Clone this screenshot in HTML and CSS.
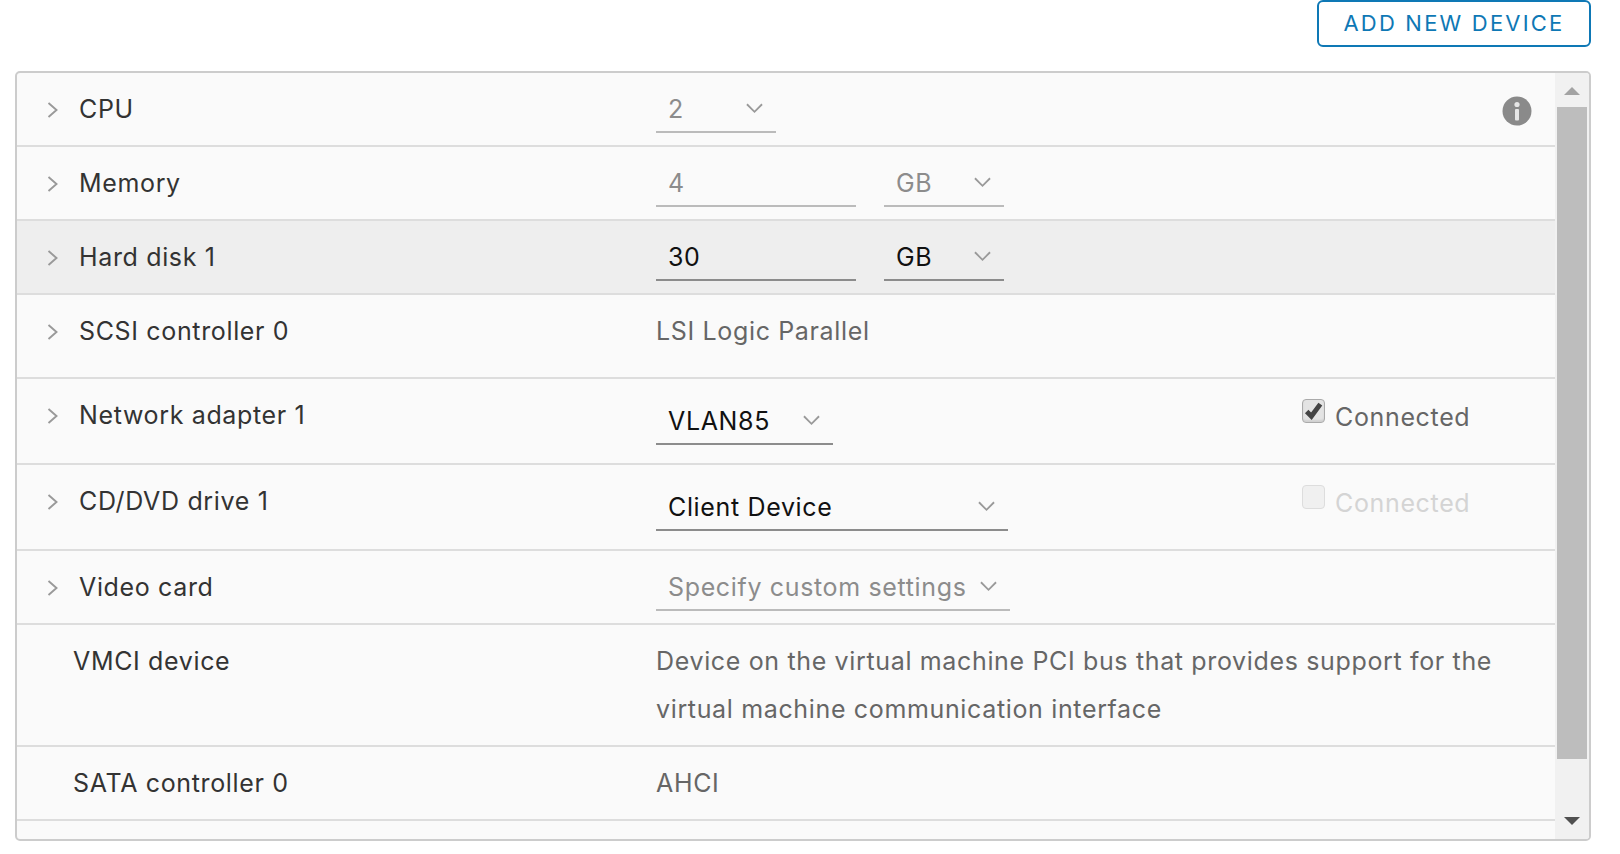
FILE: index.html
```html
<!DOCTYPE html>
<html lang="en">
<head>
<meta charset="utf-8">
<title>Virtual hardware</title>
<link rel="stylesheet" href="styles.css">
</head>
<body>
<div class="toolbar"><button class="add-btn" type="button">ADD NEW DEVICE</button></div>
<div class="panel">
  <div class="rows">
    <div class="row h74">
      <svg class="chev" viewBox="0 0 12 16"><path d="M1.5 1l8 7-8 7"/></svg>
      <div class="name">CPU</div>
      <div class="val">
        <div class="sel dis w120"><span>2</span><svg class="caret" viewBox="0 0 18 11"><path d="M1 1l8 8 8-8"/></svg></div>
      </div>
      <svg class="info" viewBox="0 0 30 30"><circle cx="15" cy="15" r="14.5"/><circle class="i" cx="15" cy="8.5" r="2.6"/><rect class="i" x="13" y="13" width="4" height="11.5" rx="1"/></svg>
    </div>
    <div class="row h74">
      <svg class="chev" viewBox="0 0 12 16"><path d="M1.5 1l8 7-8 7"/></svg>
      <div class="name">Memory</div>
      <div class="val">
        <div class="sel dis w200"><span>4</span></div>
        <div class="sel dis w120"><span>GB</span><svg class="caret" viewBox="0 0 18 11"><path d="M1 1l8 8 8-8"/></svg></div>
      </div>
    </div>
    <div class="row h74 hl">
      <svg class="chev" viewBox="0 0 12 16"><path d="M1.5 1l8 7-8 7"/></svg>
      <div class="name">Hard disk 1</div>
      <div class="val">
        <div class="sel w200"><span>30</span></div>
        <div class="sel w120"><span>GB</span><svg class="caret" viewBox="0 0 18 11"><path d="M1 1l8 8 8-8"/></svg></div>
      </div>
    </div>
    <div class="row h84">
      <svg class="chev" viewBox="0 0 12 16"><path d="M1.5 1l8 7-8 7"/></svg>
      <div class="name">SCSI controller 0</div>
      <div class="val plain">LSI Logic Parallel</div>
    </div>
    <div class="row h86">
      <svg class="chev" viewBox="0 0 12 16"><path d="M1.5 1l8 7-8 7"/></svg>
      <div class="name">Network adapter 1</div>
      <div class="val">
        <div class="sel low w177"><span>VLAN85</span><svg class="caret" viewBox="0 0 18 11"><path d="M1 1l8 8 8-8"/></svg></div>
      </div>
      <div class="conn">
        <span class="cb on"><svg viewBox="0 0 20 20"><path d="M3.5 10.5l4.5 4.5 8.5-11.5"/></svg></span>
        <span class="conn-label">Connected</span>
      </div>
    </div>
    <div class="row h86">
      <svg class="chev" viewBox="0 0 12 16"><path d="M1.5 1l8 7-8 7"/></svg>
      <div class="name">CD/DVD drive 1</div>
      <div class="val">
        <div class="sel low w352"><span>Client Device</span><svg class="caret" viewBox="0 0 18 11"><path d="M1 1l8 8 8-8"/></svg></div>
      </div>
      <div class="conn off">
        <span class="cb"></span>
        <span class="conn-label">Connected</span>
      </div>
    </div>
    <div class="row h74">
      <svg class="chev" viewBox="0 0 12 16"><path d="M1.5 1l8 7-8 7"/></svg>
      <div class="name">Video card</div>
      <div class="val">
        <div class="sel dis w354"><span>Specify custom settings</span><svg class="caret" viewBox="0 0 18 11"><path d="M1 1l8 8 8-8"/></svg></div>
      </div>
    </div>
    <div class="row h122 nochev">
      <div class="name">VMCI device</div>
      <div class="val plain wrap">Device on the virtual machine PCI bus that provides support for the virtual machine communication interface</div>
    </div>
    <div class="row h74 nochev">
      <div class="name">SATA controller 0</div>
      <div class="val plain">AHCI</div>
    </div>
    <div class="row h74"></div>
  </div>
  <div class="scrollbar">
    <div class="arrow up"></div>
    <div class="thumb"></div>
    <div class="arrow down"></div>
  </div>
</div>
</body>
</html>
```
FILE: styles.css
```css
* { box-sizing: border-box; }
html, body { margin: 0; height: 854px; overflow: hidden; background: #fff; }
body { font-family: "Inter", "Liberation Sans", sans-serif; font-size: 25px; letter-spacing: 0.65px; color: #333; padding-left: 15px; }

.toolbar { display: flex; justify-content: flex-end; height: 71px; width: 1576px; }
.add-btn {
  width: 274px; height: 47px;
  background: #fff; border: 2px solid #0e78b5; border-radius: 6px;
  color: #0e78b5; font: 400 22px "Inter", sans-serif; letter-spacing: 2.2px;
  padding: 0 0 1px;
}

.panel {
  width: 1576px; height: 770px;
  display: flex; overflow: hidden;
  background: #fafafa;
  border: 2px solid #ccc; border-radius: 5px;
}
.rows { flex: 1; min-width: 0; overflow: hidden; }
.row {
  position: relative;
  display: flex; align-items: flex-start;
  border-bottom: 2px solid #ddd;
  color: #333;
}
.h74 { height: 74px; }
.h84 { height: 84px; }
.h86 { height: 86px; }
.h122 { height: 122px; }
.hl { background: #eee; }

.chev { width: 12px; height: 16px; margin: 29px 0 0 30px; flex: none; fill: none; stroke: #999; stroke-width: 1.9; }
.name { width: 577px; margin-left: 20px; line-height: 30px; padding-top: 21px; flex: none; }
.nochev .name { width: 639px; margin-left: 0; padding-left: 56px; }

.val { display: flex; gap: 28px; padding-top: 14px; flex: none; }
.val.plain { display: block; color: #666; padding-top: 21px; line-height: 30px; }
.val.wrap { width: 850px; line-height: 48px; padding-top: 12px; }

.sel {
  height: 46px; display: flex; align-items: center; justify-content: space-between;
  padding: 0 12px 1px; color: #111;
  border-bottom: 2px solid #8c8c8c;
}
.sel.dis { color: #8c8c8c; border-bottom-color: #bbb; }
.sel.low { margin-top: 6px; }
.w120 { width: 120px; }
.w200 { width: 200px; }
.w177 { width: 177px; }
.w352 { width: 352px; }
.w354 { width: 354px; }
.caret { width: 17px; height: 11px; fill: none; stroke: #999; stroke-width: 1.9; flex: none; margin-right: 1px; }

.info { position: absolute; right: 23px; top: 23px; width: 30px; height: 30px; }
.info circle { fill: #8a8a8a; }
.info .i { fill: #e6e6e6; }

.conn { position: absolute; left: 1285px; top: 19px; display: flex; align-items: flex-start; gap: 10px; color: #666; line-height: 30px; }
.conn.off { color: #d4d4d4; }
.conn-label { padding-top: 4px; }
.cb {
  width: 23px; height: 24px; margin-top: 1px;
  border: 1.5px solid #aaa; border-radius: 4px;
  background: #e4e4e4; display: block;
  box-shadow: inset 0 -2px 2px #d0d0d0;
}
.cb svg { display: block; width: 100%; height: 100%; fill: none; stroke: #444; stroke-width: 4.6; }
.off .cb { border-color: #ddd; background: #f0f0f0; box-shadow: none; }

.scrollbar { width: 34px; flex: none; display: flex; flex-direction: column; background: #f1f1f1; padding: 0 2px; }
.arrow { height: 34px; flex: none; position: relative; }
.thumb { height: 652px; background: #bdbdbd; flex: none; }
.arrow::after { content: ""; position: absolute; left: 7px; border-left: 8px solid transparent; border-right: 8px solid transparent; }
.arrow.up::after { top: 14px; border-bottom: 8px solid #a3a3a3; }
.arrow.down { margin-top: auto; }
.arrow.down::after { bottom: 14px; border-top: 8px solid #505050; }
```
